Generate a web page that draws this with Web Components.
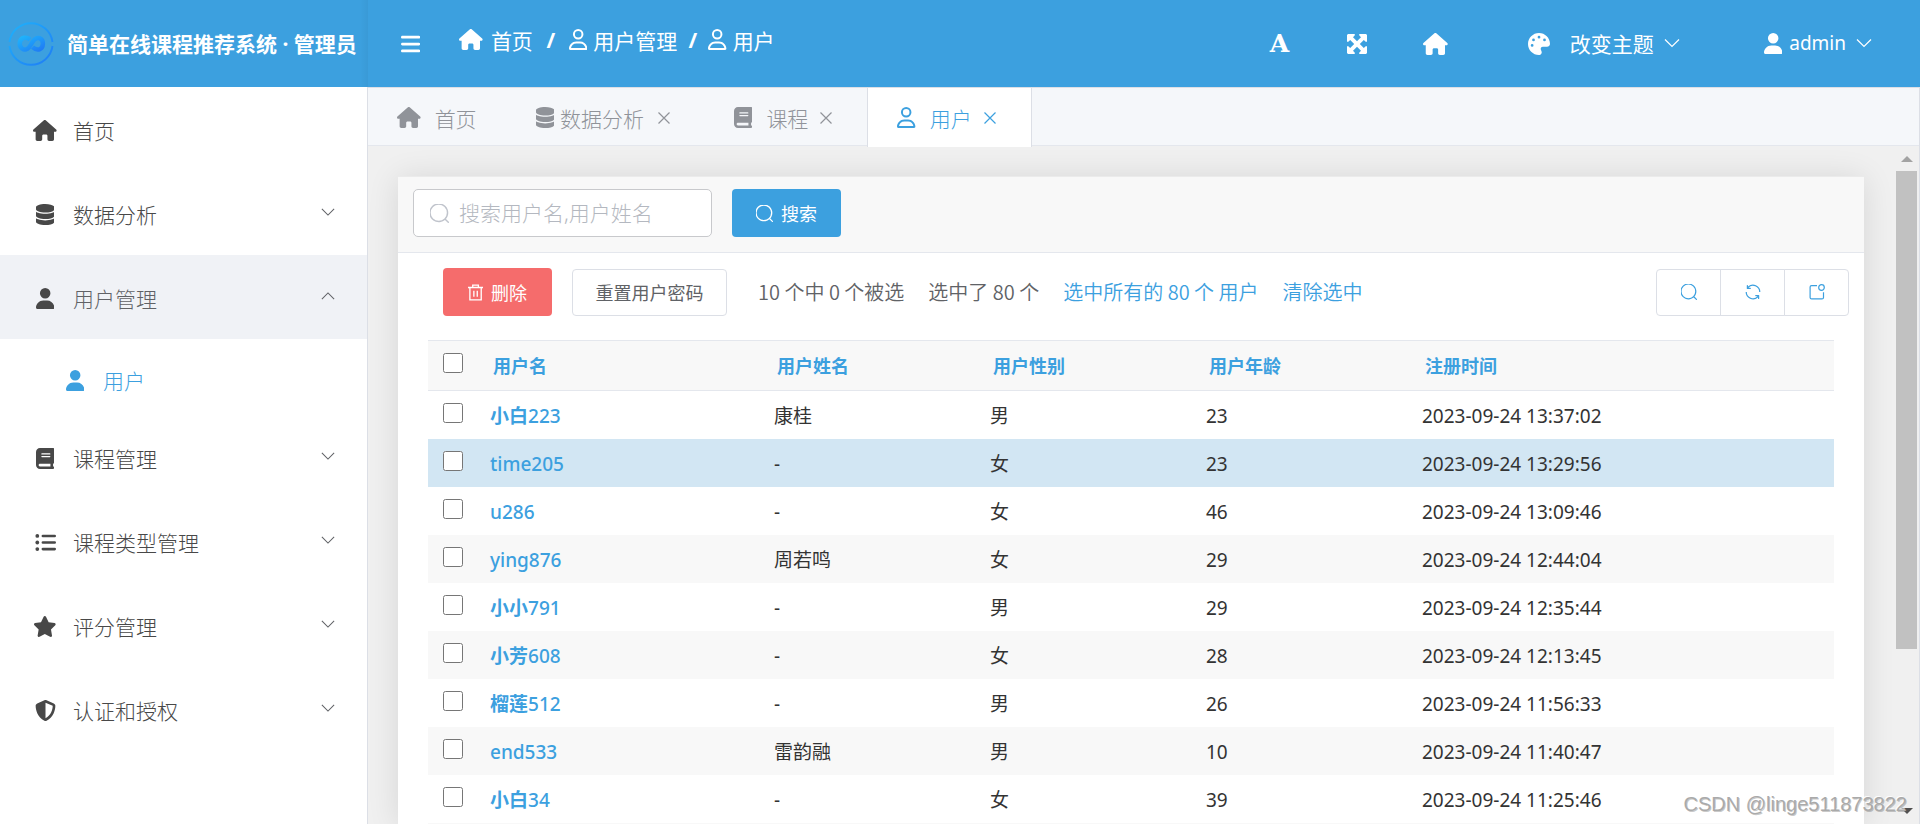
<!DOCTYPE html>
<html lang="zh-CN">
<head>
<meta charset="utf-8">
<title>简单在线课程推荐系统</title>
<style>
  html, body { height: 100%; margin: 0; }
  body {
    --brand: #3ca0df;
    --line: #dcdfe6;
    --soft: #f8f8f8;
    font-family: "Noto Sans", "Noto Sans CJK SC", sans-serif;
    font-size: 21px;
    color: #303133;
    overflow: hidden;
  }
</style>
</head>
<body>
<admin-app></admin-app>
<script>
const ICONS = {
  home: ['0 0 576 512', '<path d="M575.8 255.5c0 18-15 32.1-32 32.1h-32l.7 160.2c0 2.7-.2 5.4-.5 8.1V472c0 22.1-17.9 40-40 40H456c-1.1 0-2.2 0-3.3-.1c-1.4 .1-2.8 .1-4.2 .1H416 392c-22.1 0-40-17.9-40-40V448 384c0-17.7-14.3-32-32-32H256c-17.7 0-32 14.3-32 32v64 24c0 22.1-17.9 40-40 40H160 128.1c-1.5 0-3-.1-4.5-.2c-1.2 .1-2.4 .2-3.6 .2H104c-22.1 0-40-17.9-40-40V360c0-.9 0-1.9 .1-2.8V287.6H32c-18 0-32-14-32-32.1c0-9 3-17 10-24L266.4 8c7-7 15-8 22-8s15 2 21 7L564.8 231.5c8 7 12 15 11 24z"/>'],
  user: ['0 0 448 512', '<path d="M224 256A128 128 0 1 0 224 0a128 128 0 1 0 0 256zm-45.7 48C79.8 304 0 383.8 0 482.3C0 498.7 13.3 512 29.7 512H418.3c16.4 0 29.7-13.3 29.7-29.7C448 383.8 368.2 304 269.7 304H178.3z"/>'],
  userline: ['0 0 448 512', '<path d="M304 128a80 80 0 1 0 -160 0 80 80 0 1 0 160 0zM96 128a128 128 0 1 1 256 0A128 128 0 1 1 96 128zM49.3 464H398.7c-8.9-63.3-63.3-112-129-112H178.3c-65.7 0-120.1 48.7-129 112zM0 482.3C0 383.8 79.8 304 178.3 304h91.4C368.2 304 448 383.8 448 482.3c0 16.4-13.3 29.7-29.7 29.7H29.7C13.3 512 0 498.7 0 482.3z"/>'],
  star: ['0 0 576 512', '<path d="M316.9 18C311.6 7 300.4 0 288.1 0s-23.4 7-28.8 18L195 150.3 51.4 171.5c-12 1.8-22 10.2-25.7 21.7s-.7 24.2 7.9 32.7L137.8 329 113.2 474.7c-2 12 3 24.2 12.9 31.3s23 8 33.8 2.3l128.3-68.5 128.3 68.5c10.8 5.7 23.9 4.9 33.8-2.3s14.9-19.3 12.9-31.3L438.5 329 542.7 225.9c8.6-8.5 11.7-21.2 7.9-32.7s-13.7-19.9-25.7-21.7L381.2 150.3 316.9 18z"/>'],
  shield: ['0 0 512 512', '<path d="M256 0c4.6 0 9.2 1 13.4 2.9L457.7 82.8c22 9.3 38.4 31 38.3 57.2c-.5 99.2-41.3 280.7-213.6 363.2c-16.7 8-36.1 8-52.8 0C57.3 420.7 16.5 239.2 16 140c-.1-26.2 16.3-47.9 38.3-57.2L242.7 2.9C246.8 1 251.4 0 256 0zm0 66.8V444.8C394 378 431.1 230.1 432 141.4L256 66.8l0 0z"/>'],
  database: ['0 0 448 512', '<path d="M448 80v48c0 44.2-100.3 80-224 80S0 172.2 0 128V80C0 35.8 100.3 0 224 0S448 35.8 448 80zM393.2 214.7c20.8-7.4 39.9-16.9 54.8-28.6V288c0 44.2-100.3 80-224 80S0 332.2 0 288V186.1c14.9 11.8 34 21.2 54.8 28.6C99.7 230.7 159.5 240 224 240s124.3-9.3 169.2-25.3zM0 346.1c14.9 11.8 34 21.2 54.8 28.6C99.7 390.7 159.5 400 224 400s124.3-9.3 169.2-25.3c20.8-7.4 39.9-16.9 54.8-28.6V432c0 44.2-100.3 80-224 80S0 476.2 0 432V346.1z"/>'],
  book: ['0 0 448 512', '<path d="M96 0C43 0 0 43 0 96V416c0 53 43 96 96 96H384h32c17.7 0 32-14.3 32-32s-14.3-32-32-32V384c17.7 0 32-14.3 32-32V32c0-17.7-14.3-32-32-32H384 96zm0 384H352v64H96c-17.7 0-32-14.3-32-32s14.3-32 32-32zm32-240c0-8.8 7.2-16 16-16H336c8.8 0 16 7.2 16 16s-7.2 16-16 16H144c-8.8 0-16-7.2-16-16zm16 48H336c8.8 0 16 7.2 16 16s-7.2 16-16 16H144c-8.8 0-16-7.2-16-16s7.2-16 16-16z"/>'],
  list: ['0 0 512 512', '<path d="M192 64H480a32 32 0 0 1 0 64H192a32 32 0 0 1 0-64zm0 160H480a32 32 0 0 1 0 64H192a32 32 0 0 1 0-64zm0 160H480a32 32 0 0 1 0 64H192a32 32 0 0 1 0-64z"/><circle cx="56" cy="96" r="46"/><circle cx="56" cy="256" r="46"/><circle cx="56" cy="416" r="46"/>'],
  bars: ['0 0 448 512', '<path d="M0 96c0-18 14-32 32-32H416c18 0 32 14 32 32s-14 32-32 32H32C14 128 0 114 0 96zM0 256c0-18 14-32 32-32H416c18 0 32 14 32 32s-14 32-32 32H32c-18 0-32-14-32-32zM448 416c0 18-14 32-32 32H32c-18 0-32-14-32-32s14-32 32-32H416c18 0 32 14 32 32z"/>'],
  palette: ['0 0 512 512', '<path d="M512 256c0 .9 0 1.8 0 2.7c-.4 36.5-33.6 61.3-70.1 61.3H344c-26.5 0-48 21.5-48 48c0 3.4 .4 6.7 1 9.9c2.1 10.2 6.5 20 10.8 29.9c6.1 13.8 12.1 27.5 12.1 42c0 31.8-21.6 60.7-53.4 62c-3.5 .1-7 .2-10.6 .2C114.6 512 0 397.4 0 256S114.6 0 256 0S512 114.6 512 256zM128 288a32 32 0 1 0 -64 0 32 32 0 1 0 64 0zm0-96a32 32 0 1 0 0-64 32 32 0 1 0 0 64zM288 96a32 32 0 1 0 -64 0 32 32 0 1 0 64 0zm96 96a32 32 0 1 0 0-64 32 32 0 1 0 0 64z"/>'],
  expand: ['0 0 20 20', '<path d="M1 0h6.500l.5 1-2 2.200L10 7.200l4-4-2-2.200.5-1H19l1 1v6.500l-1 .5-2.200-2L12.800 10l4 4 2.200-2 1 .5V19l-1 1h-6.500l-.5-1 2-2.200-4-4-4 4 2 2.200-.5 1H1l-1-1v-6.500l1-.5 2.200 2 4-4-4-4L1 8l-1-.5V1z"/>'],
  search: ['96 96 832 832', '<path d="m795.904 750.72 124.992 124.928a32 32 0 0 1-45.248 45.248L750.656 795.904a416 416 0 1 1 45.248-45.248zM480 832a352 352 0 1 0 0-704 352 352 0 0 0 0 704z"/>'],
  refresh: ['96 96 832 832', '<path d="M771.776 794.88A384 384 0 0 1 128 512h64a320 320 0 0 0 555.712 216.448H654.72a32 32 0 1 1 0-64h149.056a32 32 0 0 1 32 32v148.928a32 32 0 1 1-64 0v-50.56zM276.288 295.616h92.992a32 32 0 0 1 0 64H220.16a32 32 0 0 1-32-32V178.56a32 32 0 0 1 64 0v50.56A384 384 0 0 1 896.128 512h-64a320 320 0 0 0-555.776-216.384z"/>'],
  notice: ['0 0 16 16', '<path d="M8 1.600H2.600Q1.100 1.600 1.100 3.100V13.400Q1.100 14.900 2.600 14.900H13Q14.500 14.900 14.500 13.400V8.200" fill="none" stroke="currentColor" stroke-width="1.200"/><circle cx="12.500" cy="3.500" r="2.800" fill="none" stroke="currentColor" stroke-width="1.200"/>'],
  trash: ['0 0 16 18', '<path d="M0 3.700H16M5 3.700V1.200H11V3.700M2 3.700V16.800H14V3.700M6.200 7.200V13.400M9.800 7.200V13.400" fill="none" stroke="currentColor" stroke-width="1.400"/>'],
  down: ['0 0 16 16', '<path d="M1 4.500L8 11.500L15 4.500" fill="none" stroke="currentColor" stroke-width="1.200"/>'],
  up: ['0 0 16 16', '<path d="M1 11.500L8 4.500L15 11.500" fill="none" stroke="currentColor" stroke-width="1.200"/>'],
  close: ['0 0 12 12', '<path d="M.5 .5L11.500 11.500M11.500 .5L.5 11.500" fill="none" stroke="currentColor" stroke-width="1.200"/>'],
  logo: ['0 0 46 46', '<defs><linearGradient id="g" x1="0" y1="0" x2="1" y2="1"><stop offset="0" stop-color="#1fb3fb"/><stop offset="1" stop-color="#1f7cf5"/></linearGradient></defs><g fill="none" stroke="url(#g)"><path d="M1.500 21A21.700 21.700 0 0 1 44.500 21M1.500 25A21.700 21.700 0 0 0 44.500 25" stroke-width="1.900"/><path d="M22 18.500C19.500 16.500 17.500 16.500 16 16.800C11 17.800 10.500 25 14 27.500C18 30.300 21 27 23 23.500C25.500 18.500 28.500 16.200 31.500 17.200C36.500 19 35.500 27 31.500 28.300C28.500 29.200 26.500 28 24.500 26.200" stroke-width="4.500"/></g>']
};

const define = (name, markup, setup) => {
  const template = document.createElement('template');
  template.innerHTML = markup;
  customElements.define(name, class extends HTMLElement {
    connectedCallback() {
      if (this.shadowRoot) return;
      const root = this.attachShadow({ mode: 'open' });
      root.append(template.content.cloneNode(true));
      if (setup) setup.call(this, root);
    }
  });
};

define('ui-icon', `<style>
  :host { display: inline-flex; flex: none; }
  svg { display: block; height: var(--size, 21px); fill: currentColor; }
</style>`, function (root) {
  const [box, shapes] = ICONS[this.getAttribute('name')];
  root.innerHTML += `<svg viewBox="${box}" aria-hidden="true">${shapes}</svg>`;
});

define('menu-item', `<style>
  :host { display: block; color: #484848; font-weight: 300; }
  a { box-sizing: border-box; display: flex; align-items: center; height: 84px; padding: 3px 32px 0 31px; color: inherit; text-decoration: none; }
  .lead { width: 28px; display: flex; justify-content: center; margin-right: 14px; }
  .label { flex: 1; padding-bottom: 1px; }
  .arrow { --size: 14px; color: #606266; padding-bottom: 5px; }
  :host([active]) a { background: #f0f2f6; color: #606266; }
  :host([active]) .lead { color: #484848; }
  :host([sub]) a { height: 76px; padding-left: 61px; padding-top: 6px; color: var(--brand); }
</style>
<a href="#"><span class="lead"></span><span class="label"><slot></slot></span></a>`, function (root) {
  root.querySelector('.lead').innerHTML = `<ui-icon name="${this.getAttribute('icon')}"></ui-icon>`;
  const arrow = this.getAttribute('arrow');
  if (arrow) root.querySelector('a').insertAdjacentHTML('beforeend', `<ui-icon class="arrow" name="${arrow}"></ui-icon>`);
});

define('app-sidebar', `<style>
  :host { display: block; background: #fff; border-right: 1px solid var(--line); }
</style>
<nav>
  <menu-item icon="home">首页</menu-item>
  <menu-item icon="database" arrow="down">数据分析</menu-item>
  <menu-item icon="user" arrow="up" active>用户管理</menu-item>
  <menu-item icon="user" sub>用户</menu-item>
  <menu-item icon="book" arrow="down">课程管理</menu-item>
  <menu-item icon="list" arrow="down">课程类型管理</menu-item>
  <menu-item icon="star" arrow="down">评分管理</menu-item>
  <menu-item icon="shield" arrow="down">认证和授权</menu-item>
</nav>`);

define('app-header', `<style>
  :host { display: flex; height: 87px; background: var(--brand); color: #fff; }
  .brand { box-sizing: border-box; width: 368px; flex: none; display: flex; align-items: center; gap: 13px; padding-left: 8px;
    font-weight: 700; white-space: nowrap; background: linear-gradient(to left, rgba(0,0,0,.04), transparent 8px); }
  .brand ui-icon { --size: 46px; }
  .brand span { padding-bottom: 2px; }
  button { all: unset; display: flex; align-items: center; cursor: pointer; }
  .bar { flex: 1; display: flex; align-items: center; padding: 0 48px 0 33px; }
  .crumbs { display: flex; align-items: center; margin-left: 39px; padding-bottom: 8px; flex: 1; white-space: nowrap; }
  .crumbs a { display: flex; align-items: center; gap: 6px; color: inherit; text-decoration: none; }
  .crumbs b { width: 36px; text-align: center; }
  .crumbs b.tight { width: 31px; }
  .crumbs a:first-child { gap: 8px; }
  .letter { font: 700 25px "DejaVu Serif", serif; margin-right: 58px; }
  .expand { --size: 20px; margin-right: 56px; }
  .house { --size: 22px; margin-right: 80px; }
  .theme { gap: 20px; margin-right: 84px; }
  .theme span, .account span { display: flex; align-items: center; gap: 10px; padding-bottom: 1px; }
  .theme .chev, .account .chev { --size: 16px; }
  .account { gap: 7px; }
  .account span { font-size: 19px; }
  .palette { --size: 22px; }
</style>
<div class="brand"><ui-icon name="logo"></ui-icon><span>简单在线课程推荐系统 · 管理员</span></div>
<div class="bar">
  <button aria-label="折叠菜单"><ui-icon name="bars" style="--size:22px"></ui-icon></button>
  <nav class="crumbs">
    <a href="#"><ui-icon name="home"></ui-icon>首页</a><b>/</b>
    <a href="#"><ui-icon name="userline"></ui-icon>用户管理</a><b class="tight">/</b>
    <a href="#"><ui-icon name="userline"></ui-icon>用户</a>
  </nav>
  <button class="letter">A</button>
  <button class="expand" aria-label="全屏"><ui-icon name="expand"></ui-icon></button>
  <button class="house" aria-label="主页"><ui-icon name="home"></ui-icon></button>
  <button class="theme"><ui-icon class="palette" name="palette"></ui-icon><span>改变主题<ui-icon class="chev" name="down"></ui-icon></span></button>
  <button class="account"><ui-icon name="user"></ui-icon><span>admin<ui-icon class="chev" name="down"></ui-icon></span></button>
</div>`);

define('tab-item', `<style>
  :host { display: flex; align-items: center; gap: 14px; padding: 2px 30px 0 29px; color: #909399; font-weight: 300; }
  :host([tight]) { gap: 6px; }
  :host([active]) { color: var(--brand); background: #fff; border: solid var(--line); border-width: 0 1px; margin-bottom: -2px; padding-bottom: 2px; position: relative; }
  a { color: inherit; text-decoration: none; }
  button { all: unset; --size: 12px; display: flex; padding-right: 5px; margin-left: -2px; cursor: pointer; }
  :host([tight]) button { margin-left: 8px; }
</style>`, function (root) {
  root.innerHTML += `<ui-icon name="${this.getAttribute('icon')}"></ui-icon><a href="#"><slot></slot></a>`;
  if (this.hasAttribute('closable')) root.innerHTML += '<button aria-label="关闭"><ui-icon name="close"></ui-icon></button>';
});

define('app-tabs', `<style>
  :host { display: flex; height: 57px; background: #f5f7fa; border: solid var(--line); border-width: 1px 0; border-bottom-color: #e4e7ed; }
</style>
<tab-item icon="home">首页</tab-item>
<tab-item icon="database" closable tight>数据分析</tab-item>
<tab-item icon="book" closable>课程</tab-item>
<tab-item icon="userline" closable active>用户</tab-item>`);

define('search-bar', `<style>
  :host { display: flex; gap: 20px; padding: 12px 15px 15px; background: var(--soft); border-bottom: 1px solid #e4e7ed; }
  label { box-sizing: border-box; width: 299px; height: 48px; display: flex; align-items: center; gap: 10px; padding: 0 16px;
    background: #fff; border: 1px solid #c8c9cc; border-radius: 5px; color: #c0c4cc; --size: 19px; }
  input { flex: 1; min-width: 0; border: 0; outline: 0; padding: 0; background: none; font: inherit; font-weight: 300; color: #606266; }
  input::placeholder { color: #b4b8c0; opacity: 1; }
  button { width: 109px; height: 48px; border: 0; border-radius: 4px; background: var(--brand); color: #fff; font: inherit; font-size: 18px;
    display: flex; align-items: center; justify-content: center; gap: 8px; --size: 17px; }
</style>
<label><ui-icon name="search"></ui-icon><input type="text" aria-label="搜索" placeholder="搜索用户名,用户姓名"></label>
<button><ui-icon name="search"></ui-icon>搜索</button>`);

define('table-actions', `<style>
  :host { display: flex; align-items: center; padding: 15px 15px 0 45px; font: 350 20px "Noto Sans CJK SC", sans-serif; color: #606266; white-space: nowrap; }
  button { box-sizing: border-box; height: 47px; font: 400 18px "Noto Sans CJK SC", sans-serif; background: #fff; color: #606266;
    border: 1px solid var(--line); border-radius: 4px; padding: 0; display: flex; align-items: center; justify-content: center; gap: 8px; }
  .delete { height: 48px; width: 109px; background: #f56c6c; border: 0; color: #fff; --size: 17px; }
  .reset { width: 155px; margin: 0 31px 0 20px; }
  span, a { margin-right: 24px; padding-bottom: 2px; }
  a { color: var(--brand); text-decoration: none; }
  .group { margin-left: auto; display: flex; }
  .group button { width: 65px; margin-left: -1px; color: var(--brand); border-radius: 0; --size: 16px; }
  .group button:first-child { border-radius: 4px 0 0 4px; }
  .group button:last-child { border-radius: 0 4px 4px 0; }
</style>
<button class="delete"><ui-icon name="trash"></ui-icon>删除</button>
<button class="reset">重置用户密码</button>
<span>10 个中 0 个被选</span><span>选中了 80 个</span>
<a href="#">选中所有的 80 个 用户</a><a href="#">清除选中</a>
<div class="group">
  <button aria-label="搜索"><ui-icon name="search"></ui-icon></button>
  <button aria-label="刷新"><ui-icon name="refresh"></ui-icon></button>
  <button aria-label="新窗口"><ui-icon name="notice"></ui-icon></button>
</div>`);

const USERS = [
  ['小白223', '康桂', '男', '23', '2023-09-24 13:37:02'],
  ['time205', '-', '女', '23', '2023-09-24 13:29:56'],
  ['u286', '-', '女', '46', '2023-09-24 13:09:46'],
  ['ying876', '周若鸣', '女', '29', '2023-09-24 12:44:04'],
  ['小小791', '-', '男', '29', '2023-09-24 12:35:44'],
  ['小芳608', '-', '女', '28', '2023-09-24 12:13:45'],
  ['榴莲512', '-', '男', '26', '2023-09-24 11:56:33'],
  ['end533', '雷韵融', '男', '10', '2023-09-24 11:40:47'],
  ['小白34', '-', '女', '39', '2023-09-24 11:25:46']
];

define('user-table', `<style>
  :host { display: block; padding: 24px 30px 60px; }
  table { width: 100%; table-layout: fixed; border-collapse: separate; border-spacing: 0; font-size: 19px; color: #333; }
  th, td { box-sizing: border-box; height: 48px; padding: 2px 12px 0; text-align: left; line-height: 24px; font-weight: 400; }
  thead th { height: 51px; padding: 0 15px; background: var(--soft); border: solid #e4e7ed; border-width: 1px 0; font-size: 18px; font-weight: 700; }
  a { color: var(--brand); text-decoration: none; }
  tbody a { font-weight: 500; }
  b { font-weight: 700; }
  tr > :first-child { padding: 0 0 4px 15px; }
  thead tr > :first-child { padding-bottom: 6px; }
  tbody tr:nth-child(even) { background: var(--soft); }
  tbody tr.hover { background: #d2e6f3; }
  input { display: block; width: 20px; height: 20px; margin: 0; }
</style>
<table>
  <colgroup><col style="width:50px"><col style="width:284px"><col style="width:216px"><col style="width:216px"><col style="width:216px"><col style="width:424px"></colgroup>
  <thead><tr><th><input type="checkbox" aria-label="全选"></th><th><a href="#">用户名</a></th><th><a href="#">用户姓名</a></th><th><a href="#">用户性别</a></th><th><a href="#">用户年龄</a></th><th><a href="#">注册时间</a></th></tr></thead>
  <tbody></tbody>
</table>`, function (root) {
  root.querySelector('tbody').innerHTML = USERS.map((user, i) => {
    const name = user[0].replace(/[\u4e00-\u9fff]+/, '<b>$&</b>');
    return `<tr${i === 1 ? ' class="hover"' : ''}><td><input type="checkbox" aria-label="选择 ${user[0]}"></td><td><a href="#">${name}</a></td>` +
      user.slice(1).map(v => `<td>${v}</td>`).join('') + '</tr>';
  }).join('') + '<tr><td></td><td></td><td></td><td></td><td></td><td></td></tr>';
});

define('data-card', `<style>
  :host { display: block; background: #fff; box-shadow: 0 2px 30px rgba(0,0,0,.11); border-top: 1px solid #ebebeb; }
</style><slot></slot>`);

define('scroll-rail', `<style>
  :host { display: flex; flex-direction: column; align-items: center; width: 21px; padding: 10px 2px 10px 0; }
  i { border: 6px solid transparent; border-top: 0; border-bottom: 6px solid #a3a3a3; }
  .thumb { align-self: stretch; margin-top: 9px; flex: 3; background: #c1c1c1; }
  .rest { flex: 1; }
  .end { border: 6px solid transparent; border-bottom: 0; border-top: 6px solid #505050; }
</style><i></i><div class="thumb"></div><div class="rest"></div><i class="end"></i>`);

define('admin-app', `<style>
  :host { display: grid; grid-template: 87px minmax(0, 1fr) / 368px minmax(0, 1fr); height: 100vh; position: relative; overflow: hidden; }
  app-header { grid-column: 1 / -1; }
  main { display: flex; flex-direction: column; min-height: 0; border-right: 1px solid var(--line); background: #f0f0f0; }
  .body { flex: 1; min-height: 0; display: flex; overflow: hidden; gap: 32px; padding-left: 30px; }
  data-card { flex: 1; min-width: 0; margin-top: 30px; }
  .mark { position: absolute; right: 13px; bottom: 8px; font: 20px "Liberation Sans", sans-serif; color: #aaa; text-shadow: -1px -1px 0 rgba(255,255,255,.9), 1px 1px 0 rgba(100,100,100,.35); }
</style>
<app-header></app-header>
<app-sidebar></app-sidebar>
<main>
  <app-tabs></app-tabs>
  <div class="body">
    <data-card><search-bar></search-bar><table-actions></table-actions><user-table></user-table></data-card>
    <scroll-rail></scroll-rail>
  </div>
</main>
<div class="mark">CSDN @linge511873822</div>`);
</script>
</body>
</html>
